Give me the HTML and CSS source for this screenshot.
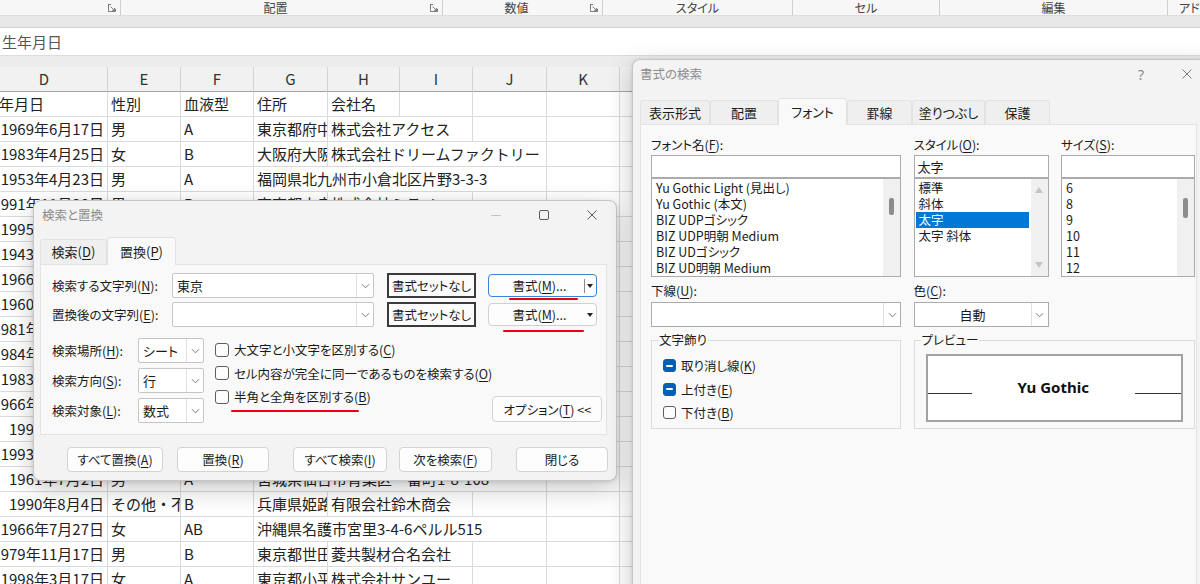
FILE: index.html
```html
<!DOCTYPE html>
<html lang="ja">
<head>
<meta charset="utf-8">
<title>検索と置換</title>
<link rel="stylesheet" href="styles.css">
</head>
<body>
<div class="app">
  <div class="ribbon">
    <div class="grp g0"><span class="glabel"></span><svg class="launch" viewBox="0 0 9 9"><path d="M0.5 3.5V0.5H3.5M0.5 0.5V8.5H8.5V5.5M3 3L7.5 7.5M7.5 4.5V7.5H4.5"/></svg></div>
    <div class="grp g1"><span class="glabel">配置</span><svg class="launch" viewBox="0 0 9 9"><path d="M0.5 3.5V0.5H3.5M0.5 0.5V8.5H8.5V5.5M3 3L7.5 7.5M7.5 4.5V7.5H4.5"/></svg></div>
    <div class="grp g2"><span class="glabel">数値</span><svg class="launch" viewBox="0 0 9 9"><path d="M0.5 3.5V0.5H3.5M0.5 0.5V8.5H8.5V5.5M3 3L7.5 7.5M7.5 4.5V7.5H4.5"/></svg></div>
    <div class="grp g3"><span class="glabel">スタイル</span></div>
    <div class="grp g4"><span class="glabel">セル</span></div>
    <div class="grp g5"><span class="glabel">編集</span></div>
    <div class="grp g6"><span class="glabel">アドイン</span></div>
  </div>
  <div class="rfoot"></div>
  <div class="fbar">生年月日</div>
  <div class="gapband"></div>

  <div class="sheet">
    <div class="row hdr"><div class="c">D</div><div class="c">E</div><div class="c">F</div><div class="c">G</div><div class="c">H</div><div class="c">I</div><div class="c">J</div><div class="c">K</div><div class="c">L</div></div>
    <div class="row"><div class="c">生年月日</div><div class="c">性別</div><div class="c">血液型</div><div class="c">住所</div><div class="c">会社名</div><div class="c"></div><div class="c"></div><div class="c"></div><div class="c"></div></div>
    <div class="row"><div class="c d"><span>1969年6月17日</span></div><div class="c">男</div><div class="c">A</div><div class="c">東京都府中市</div><div class="c s2">株式会社アクセス</div><div class="c"></div><div class="c"></div><div class="c"></div></div>
    <div class="row"><div class="c d"><span>1983年4月25日</span></div><div class="c">女</div><div class="c">B</div><div class="c">大阪府大阪市</div><div class="c s3">株式会社ドリームファクトリー</div><div class="c"></div><div class="c"></div></div>
    <div class="row"><div class="c d"><span>1953年4月23日</span></div><div class="c">男</div><div class="c">A</div><div class="c s4">福岡県北九州市小倉北区片野3-3-3</div><div class="c"></div><div class="c"></div></div>
    <div class="row"><div class="c d"><span>1991年11月30日</span></div><div class="c">男</div><div class="c">B</div><div class="c">東京都中央区</div><div class="c s2">株式会社ミライ</div><div class="c"></div><div class="c"></div><div class="c"></div></div>
    <div class="row"><div class="c d"><span>1995年3月12日</span></div><div class="c">女</div><div class="c">O</div><div class="c">北海道札幌市</div><div class="c s2">株式会社ノース</div><div class="c"></div><div class="c"></div><div class="c"></div></div>
    <div class="row"><div class="c d"><span>1943年8月25日</span></div><div class="c">男</div><div class="c">A</div><div class="c">愛知県名古屋市</div><div class="c s2">中部商事株式会社</div><div class="c"></div><div class="c"></div><div class="c"></div></div>
    <div class="row"><div class="c d"><span>1966年2月14日</span></div><div class="c">女</div><div class="c">B</div><div class="c">東京都港区</div><div class="c s2">株式会社サクラ</div><div class="c"></div><div class="c"></div><div class="c"></div></div>
    <div class="row"><div class="c d"><span>1960年9月30日</span></div><div class="c">男</div><div class="c">AB</div><div class="c">京都府京都市</div><div class="c s2">有限会社山田工業</div><div class="c"></div><div class="c"></div><div class="c"></div></div>
    <div class="row"><div class="c d"><span>1981年10月15日</span></div><div class="c">女</div><div class="c">A</div><div class="c">神奈川県横浜市</div><div class="c s2">株式会社ハマ</div><div class="c"></div><div class="c"></div><div class="c"></div></div>
    <div class="row"><div class="c d"><span>1984年11月21日</span></div><div class="c">男</div><div class="c">O</div><div class="c">広島県広島市</div><div class="c s2">株式会社セト</div><div class="c"></div><div class="c"></div><div class="c"></div></div>
    <div class="row"><div class="c d"><span>1983年5月19日</span></div><div class="c">女</div><div class="c">B</div><div class="c">東京都新宿区</div><div class="c s2">株式会社ミドリ</div><div class="c"></div><div class="c"></div><div class="c"></div></div>
    <div class="row"><div class="c d"><span>1966年12月24日</span></div><div class="c">男</div><div class="c">A</div><div class="c">埼玉県川口市</div><div class="c s2">川口産業株式会社</div><div class="c"></div><div class="c"></div><div class="c"></div></div>
    <div class="row"><div class="c d"><span>1992年1月5日</span></div><div class="c">女</div><div class="c">O</div><div class="c">千葉県船橋市</div><div class="c s2">株式会社フナ</div><div class="c"></div><div class="c"></div><div class="c"></div></div>
    <div class="row"><div class="c d"><span>1993年7月11日</span></div><div class="c">男</div><div class="c">B</div><div class="c">東京都江東区</div><div class="c s2">株式会社トーヨー</div><div class="c"></div><div class="c"></div><div class="c"></div></div>
    <div class="row"><div class="c d"><span>1961年7月2日</span></div><div class="c">男</div><div class="c">A</div><div class="c s4">宮城県仙台市青葉区一番町1-8-108</div><div class="c"></div><div class="c"></div></div>
    <div class="row"><div class="c d"><span>1990年8月4日</span></div><div class="c">その他・不明</div><div class="c">B</div><div class="c">兵庫県姫路市</div><div class="c s2">有限会社鈴木商会</div><div class="c"></div><div class="c"></div><div class="c"></div></div>
    <div class="row"><div class="c d"><span>1966年7月27日</span></div><div class="c">女</div><div class="c">AB</div><div class="c s4">沖縄県名護市宮里3-4-6ペルル515</div><div class="c"></div><div class="c"></div></div>
    <div class="row"><div class="c d"><span>1979年11月17日</span></div><div class="c">男</div><div class="c">B</div><div class="c">東京都世田谷区</div><div class="c s2">菱共製材合名会社</div><div class="c"></div><div class="c"></div><div class="c"></div></div>
    <div class="row"><div class="c d"><span>1998年3月17日</span></div><div class="c">女</div><div class="c">A</div><div class="c">東京都小平市</div><div class="c s2">株式会社サンユー</div><div class="c"></div><div class="c"></div><div class="c"></div></div>
  </div>

  <!-- 検索と置換 dialog -->
  <div class="dlg find">
    <div class="titlebar">
      <span class="title">検索と置換</span>
      <span class="wbtn"><svg class="wi wmin" viewBox="0 0 10 10"><path d="M0 5.5H10"/></svg></span>
      <span class="wbtn"><svg class="wi" viewBox="0 0 10 10"><rect x="0.5" y="0.5" width="9" height="9" rx="1.5"/></svg></span>
      <span class="wbtn"><svg class="wi" viewBox="0 0 10 10"><path d="M0.5 0.5L9.5 9.5M9.5 0.5L0.5 9.5"/></svg></span>
    </div>
    <div class="tabs">
      <div class="tab t1">検索(<u>D</u>)</div>
      <div class="tab t2 active">置換(<u>P</u>)</div>
    </div>
    <div class="panel">
      <div class="frow">
        <span class="flabel">検索する文字列(<u>N</u>):</span>
        <div class="combo c-find"><span class="cval">東京</span><span class="cdrop"><svg class="chev" viewBox="0 0 10 6"><path d="M1 1L5 5L9 1"/></svg></span></div>
        <div class="preset">書式セットなし</div>
        <div class="split focus"><span class="slabel">書式(<u>M</u>)...</span><span class="sarrow"></span></div>
      </div>
      <div class="frow">
        <span class="flabel">置換後の文字列(<u>E</u>):</span>
        <div class="combo c-find"><span class="cval"></span><span class="cdrop"><svg class="chev" viewBox="0 0 10 6"><path d="M1 1L5 5L9 1"/></svg></span></div>
        <div class="preset">書式セットなし</div>
        <div class="split"><span class="slabel">書式(<u>M</u>)...</span><span class="sarrow"></span></div>
      </div>
      <div class="opts">
        <div class="selcol">
          <div class="srow"><span class="slbl">検索場所(<u>H</u>):</span><div class="combo c-sel"><span class="cval">シート</span><span class="cdrop"><svg class="chev" viewBox="0 0 10 6"><path d="M1 1L5 5L9 1"/></svg></span></div></div>
          <div class="srow"><span class="slbl">検索方向(<u>S</u>):</span><div class="combo c-sel"><span class="cval">行</span><span class="cdrop"><svg class="chev" viewBox="0 0 10 6"><path d="M1 1L5 5L9 1"/></svg></span></div></div>
          <div class="srow"><span class="slbl">検索対象(<u>L</u>):</span><div class="combo c-sel"><span class="cval">数式</span><span class="cdrop"><svg class="chev" viewBox="0 0 10 6"><path d="M1 1L5 5L9 1"/></svg></span></div></div>
        </div>
        <div class="chkcol">
          <div class="chk"><span class="box"></span>大文字と小文字を区別する(<u>C</u>)</div>
          <div class="chk"><span class="box"></span>セル内容が完全に同一であるものを検索する(<u>O</u>)</div>
          <div class="chk"><span class="box"></span>半角と全角を区別する(<u>B</u>)</div>
        </div>
        <div class="btn optbtn">オプション(<u>T</u>) &lt;&lt;</div>
      </div>
    </div>
    <div class="foot">
      <div class="btn b1">すべて置換(<u>A</u>)</div>
      <div class="btn b2">置換(<u>R</u>)</div>
      <div class="btn b3">すべて検索(<u>I</u>)</div>
      <div class="btn b4">次を検索(<u>F</u>)</div>
      <div class="btn b5">閉じる</div>
    </div>
    <span class="redline rl1"></span>
    <span class="redline rl2"></span>
    <span class="redline rl3"></span>
  </div>

  <!-- 書式の検索 dialog -->
  <div class="dlg fmt">
    <div class="titlebar ftitle">
      <span class="title">書式の検索</span>
      <span class="wbtn help">?</span>
      <span class="wbtn"><svg class="wi wclose" viewBox="0 0 10 10"><path d="M0.5 0.5L9.5 9.5M9.5 0.5L0.5 9.5"/></svg></span>
    </div>
    <div class="tabs ftabs">
      <div class="tab ft1">表示形式</div>
      <div class="tab ft2">配置</div>
      <div class="tab ft3 active">フォント</div>
      <div class="tab ft4">罫線</div>
      <div class="tab ft5">塗りつぶし</div>
      <div class="tab ft6">保護</div>
    </div>
    <div class="panel fpanel">
      <div class="fgrid">
        <span class="glbl">フォント名(<u>F</u>):</span>
        <span class="glbl">スタイル(<u>O</u>):</span>
        <span class="glbl">サイズ(<u>S</u>):</span>

        <div class="tin"></div>
        <div class="tin">太字</div>
        <div class="tin"></div>

        <div class="lst">
          <div class="items">
            <div class="it">Yu Gothic Light (見出し)</div>
            <div class="it">Yu Gothic (本文)</div>
            <div class="it">BIZ UDPゴシック</div>
            <div class="it">BIZ UDP明朝 Medium</div>
            <div class="it">BIZ UDゴシック</div>
            <div class="it">BIZ UD明朝 Medium</div>
          </div>
          <div class="sb"><span class="thumb"></span></div>
        </div>
        <div class="lst">
          <div class="items">
            <div class="it">標準</div>
            <div class="it">斜体</div>
            <div class="it sel">太字</div>
            <div class="it">太字 斜体</div>
          </div>
          <div class="sb sbarrows"><span class="tri up"></span><span class="tri down"></span></div>
        </div>
        <div class="lst">
          <div class="items">
            <div class="it">6</div>
            <div class="it">8</div>
            <div class="it">9</div>
            <div class="it">10</div>
            <div class="it">11</div>
            <div class="it">12</div>
          </div>
          <div class="sb"><span class="thumb tall"></span></div>
        </div>

        <span class="glbl low">下線(<u>U</u>):</span>
        <span class="glbl low">色(<u>C</u>):</span>
        <span class="empty"></span>

        <div class="combo fcombo"><span class="cval"></span><span class="cdrop"><svg class="chev" viewBox="0 0 10 6"><path d="M1 1L5 5L9 1"/></svg></span></div>
        <div class="combo fcombo color"><span class="cval">自動</span><span class="cdrop"><svg class="chev" viewBox="0 0 10 6"><path d="M1 1L5 5L9 1"/></svg></span></div>
        <span class="empty"></span>

        <fieldset class="grpbox">
          <legend>文字飾り</legend>
          <div class="chk2"><span class="cb on"></span>取り消し線(<u>K</u>)</div>
          <div class="chk2"><span class="cb on"></span>上付き(<u>E</u>)</div>
          <div class="chk2"><span class="cb"></span>下付き(<u>B</u>)</div>
        </fieldset>
        <fieldset class="grpbox preview">
          <legend>プレビュー</legend>
          <div class="pv">
            <span class="pl pl-left"></span>
            <span class="pt">Yu Gothic</span>
            <span class="pl pl-right"></span>
          </div>
        </fieldset>
      </div>
    </div>
  </div>
</div>
</body>
</html>
```

FILE: styles.css
```css
* { box-sizing: border-box; }
html, body { margin: 0; padding: 0; }
body {
  width: 1200px;
  height: 584px;
  overflow: hidden;
  background: #fff;
  font-family: "Noto Sans CJK JP", "Noto Sans", sans-serif;
  color: #1b1b1b;
}
u { text-decoration-thickness: 1px; text-underline-offset: 2px; }
.app { position: relative; width: 1200px; height: 584px; overflow: hidden; }

/* ribbon */
.ribbon { display: flex; height: 15px; background: #f7f7f7; font-size: 12px; color: #444; font-feature-settings: "palt"; }
.grp { display: flex; align-items: center; height: 15px; border-right: 1px solid #cfcfcf; flex: none; }
.glabel { flex: 1; text-align: center; line-height: 15px; white-space: nowrap; overflow: hidden; }
.launch { width: 8px; height: 8px; margin-right: 4px; flex: none; fill: none; stroke: #6a6a6a; stroke-width: 1; }
.g0 { width: 121px; }
.g1 { width: 322px; }
.g2 { width: 160px; }
.g3 { width: 190px; }
.g4 { width: 147px; }
.g5 { width: 228px; }
.g6 { width: 64px; border-right: none; }
.rfoot { height: 13px; background: #e8e8e8; border-top: 1px solid #dedede; border-bottom: 1px solid #d2d2d2; }
.fbar { height: 27px; background: #fff; font-size: 15px; color: #555; line-height: 27px; padding-left: 2px; }
.gapband { height: 12px; background: #ececec; border-top: 1px solid #dcdcdc; }

/* sheet */
.sheet { margin-left: -19px; }
.row { display: grid; grid-template-columns: 127px 73px 73px 74px 72px 73px 74px 73px 140px; height: 25px; }
.c {
  border-right: 1px solid #dadada;
  border-bottom: 1px solid #dadada;
  padding: 0 3px;
  line-height: 24px;
  font-size: 15px;
  color: #222;
  white-space: nowrap;
  overflow: hidden;
}
.hdr { background: #f1f1f1; }
.hdr .c { text-align: center; color: #333; border-bottom-color: #a3a3a3; border-right-color: #d3d3d3; }
.d { display: flex; justify-content: flex-end; }
.d span { flex: none; }
.s2 { grid-column: span 2; }
.s3 { grid-column: span 3; }
.s4 { grid-column: span 4; }

/* dialogs */
.dlg {
  position: absolute;
  background: #f3f3f3;
  border: 1px solid #c6c6c6;
  border-radius: 8px;
  box-shadow: 0 8px 26px rgba(0,0,0,0.22), 0 1px 4px rgba(0,0,0,0.12);
  font-size: 12.5px;
  color: #1b1b1b;
  font-feature-settings: "palt";
}
.find { left: 33px; top: 200px; width: 584px; height: 281px; }
.fmt { left: 632px; top: 59px; width: 580px; height: 560px; }
.titlebar { display: flex; height: 36px; }
.ftitle { height: 38px; }
.title { flex: 1; padding: 6px 0 0 8px; line-height: 16px; color: #8c8c8c; }
.fmt .title { padding-left: 7px; }
.wbtn { width: 48px; height: 28px; display: flex; align-items: center; justify-content: center; flex: none; }
.wi { width: 10px; height: 10px; fill: none; stroke: #5a5a5a; stroke-width: 1; }
.wmin { stroke: #c4c4c4; }
.wclose { stroke: #7a7a7a; }
.help { color: #8a8a8a; font-size: 14px; font-family: "Noto Sans", sans-serif; padding-left: 4px; }

.tabs { display: flex; height: 27px; padding-left: 6px; }
.tab {
  height: 25px;
  margin-top: 2px;
  text-align: center;
  line-height: 24px;
  background: #efefef;
  border: 1px solid #e2e2e2;
  border-bottom: none;
  border-radius: 3px 3px 0 0;
  flex: none;
  font-size: 13px;
}
.tab.active {
  height: 28px;
  margin-top: 0;
  line-height: 27px;
  background: #f9f9f9;
  position: relative;
  z-index: 1;
  margin-bottom: -1px;
}
.t1 { width: 67px; }
.t2 { width: 69px; }

.panel { margin: 0 9px 0 6px; height: 171px; background: #f9f9f9; border: 1px solid #e3e3e3; padding: 8px 0 0 11px; }

.frow { display: flex; align-items: center; height: 25px; margin-bottom: 4px; }
.flabel { width: 120px; flex: none; white-space: nowrap; }
.combo { display: flex; height: 25px; background: #fff; border: 1px solid #c6c6c6; border-radius: 2px; flex: none; }
.c-find { width: 202px; }
.cval { flex: 1; padding-left: 4px; line-height: 23px; font-size: 13px; white-space: nowrap; }
.cdrop { width: 17px; border-left: 1px solid #e0e0e0; display: flex; align-items: center; justify-content: center; flex: none; }
.chev { width: 9px; height: 6px; fill: none; stroke: #777; stroke-width: 1.1; }
.preset {
  width: 89px; height: 25px; margin-left: 13px; flex: none;
  border: 2px solid #3a3a3a; background: #fbfbfb;
  text-align: center; line-height: 21px; white-space: nowrap;
}
.split {
  width: 109px; height: 23px; margin-left: 12px; flex: none;
  display: flex; align-items: center;
  background: #fdfdfd; border: 1px solid #d0d0d0; border-radius: 4px;
}
.split.focus { border-color: #3a84d6; }
.slabel { flex: 1; text-align: center; white-space: nowrap; padding-left: 6px; }
.sarrow { width: 11px; height: 14px; margin-right: 1px; display: flex; align-items: center; justify-content: center; }
.sarrow::after { content: ""; border-left: 3px solid transparent; border-right: 3px solid transparent; border-top: 4px solid #222; }
.split.focus .sarrow { border-left: 1px solid #8a8a8a; }

.opts { display: flex; margin-top: 11px; }
.selcol { display: flex; flex-direction: column; gap: 5px; width: 152px; flex: none; }
.srow { display: flex; align-items: center; height: 25px; }
.slbl { width: 86px; flex: none; white-space: nowrap; }
.c-sel { width: 66px; }
.chkcol { margin-left: 11px; flex: 1; display: flex; flex-direction: column; }
.chk { display: flex; align-items: center; height: 23.5px; white-space: nowrap; }
.box { width: 14px; height: 14px; border: 1px solid #5f5f5f; border-radius: 3px; background: #fcfcfc; margin-right: 5px; flex: none; }
.btn {
  height: 25px; background: #fdfdfd; border: 1px solid #d3d3d3; border-radius: 4px;
  display: flex; align-items: center; justify-content: center; white-space: nowrap; flex: none;
}
.optbtn { align-self: flex-end; width: 110px; height: 26px; margin-right: 9px; margin-bottom: 1px; }

.foot { display: flex; padding: 12px 0 0 33px; }
.b1 { width: 96px; }
.b2 { width: 92px; margin-left: 14px; }
.b3 { width: 94px; margin-left: 24px; }
.b4 { width: 93px; margin-left: 12px; }
.b5 { width: 92px; margin-left: 24px; }

.redline { position: absolute; height: 2px; background: #e6001a; border-radius: 1px; }
.rl1 { left: 475px; top: 97px; width: 69px; }
.rl2 { left: 469px; top: 129px; width: 81px; }
.rl3 { left: 197px; top: 209px; width: 128px; }

/* format dialog */
.ftabs { height: 26px; padding-left: 7px; }
.ftabs .tab { height: 24px; line-height: 23px; }
.ftabs .tab.active { height: 27px; line-height: 25px; }
.ft1 { width: 70px; }
.ft2 { width: 68px; }
.ft3 { width: 69px; }
.ft4 { width: 65px; }
.ft5 { width: 73px; }
.ft6 { width: 65px; }
.fpanel { margin: 0 0 0 7px; width: 557px; height: 480px; padding: 12px 0 0 10px; }
.fgrid {
  display: grid;
  grid-template-columns: 250px 135px 134px;
  grid-template-rows: 16px 25px 99px 22px 28px 102px;
  column-gap: 12.5px;
}
.glbl { line-height: 16px; white-space: nowrap; }
.glbl.low { align-self: end; }
.tin {
  margin-top: 2px; height: 23px; background: #fff; border: 1px solid #ababab;
  padding-left: 3px; line-height: 21px; font-size: 13px;
}
.lst { height: 99px; border: 1px solid #ababab; background: #fff; display: flex; }
.items { flex: 1; padding: 1px 0 0 1px; line-height: 16px; white-space: nowrap; overflow: hidden; font-size: 12.5px; }
.it { padding-left: 3px; }
.it.sel { background: #0078d7; color: #fff; margin-right: 2px; }
.sb { width: 17px; background: #f0f0f0; display: flex; flex-direction: column; align-items: center; flex: none; }
.thumb { margin-top: 19px; width: 5px; height: 17px; background: #8c8c8c; border-radius: 2px; }
.thumb.tall { height: 20px; }
.sbarrows { justify-content: space-between; padding: 8px 0 8px; }
.tri { width: 0; height: 0; border-left: 4px solid transparent; border-right: 4px solid transparent; }
.tri.up { border-bottom: 6px solid #c4c4c4; }
.tri.down { border-top: 6px solid #c4c4c4; }
.fcombo { margin-top: 3px; height: 25px; border-color: #ababab; border-radius: 0; }
.color .cval { text-align: center; padding-left: 0; }

.grpbox {
  margin: 4px 0 0 0;
  height: 98px;
  padding: 5px 11px 0 11px;
  border: 1px solid #dcdcdc;
  min-width: 0;
}
.grpbox legend { padding: 0 1px; line-height: 18px; margin-left: -5px; font-size: 12.5px; }
.preview { grid-column: 2 / span 2; }
.chk2 { display: flex; align-items: center; height: 23.5px; white-space: nowrap; }
.cb { width: 13px; height: 13px; border: 1px solid #5f5f5f; border-radius: 3px; background: #fcfcfc; margin-right: 5px; flex: none; display: flex; align-items: center; justify-content: center; }
.cb.on { background: #005fb8; border-color: #005fb8; }
.cb.on::after { content: ""; width: 7px; height: 2px; background: #fff; border-radius: 1px; }
.pv { height: 68px; border: 2px solid #a3a3a3; background: #fff; display: flex; }
.pl { height: 1px; background: #333; margin-top: 37px; flex: none; }
.pl-left { width: 44px; }
.pl-right { width: 46px; }
.pt {
  flex: 1; text-align: center; font-weight: bold;
  font-family: "Noto Sans", sans-serif; font-size: 15px; line-height: 62px; color: #111;
}
```
